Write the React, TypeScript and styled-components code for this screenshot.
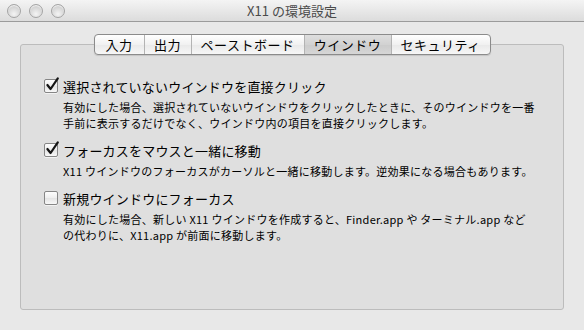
import React from "react";
import styled, { createGlobalStyle } from "styled-components";

const Global = createGlobalStyle`
  html, body { margin: 0; padding: 0; background: #e8e8e8; }
  body { font-family: "Noto Sans CJK JP", "Noto Sans", sans-serif; }
`;

const Window = styled.div`
  width: 584px;
  height: 330px;
  background: #e8e8e8;
  display: flex;
  flex-direction: column;
  overflow: hidden;
`;

const TitleBar = styled.div`
  height: 21px;
  border-bottom: 1px solid #9b9b9b;
  background: linear-gradient(#f4f4f4, #dcdcdc);
  display: flex;
  align-items: center;
  position: relative;
`;

const Lights = styled.div`
  display: flex;
  gap: 8px;
  padding-left: 7px;
`;

const Light = styled.div`
  width: 12px;
  height: 12px;
  border-radius: 50%;
  border: 1px solid #a4a4a4;
  background: radial-gradient(circle at 50% 75%, #f4f4f4 0%, #d8d8d8 55%, #c0c0c0 100%);
  box-shadow: inset 0 1px 1px rgba(255,255,255,0.8);
`;

const Title = styled.div`
  position: absolute;
  left: 0;
  right: 0;
  top: 0;
  height: 21px;
  line-height: 21px;
  text-align: center;
  font-size: 13px;
  color: #4a4a4a;
  pointer-events: none;
`;

const Body = styled.div`
  flex: 1;
  padding: 22px 20px 20px 20px;
  display: flex;
`;

const Panel = styled.div`
  flex: 1;
  border: 1px solid #bcbcbc;
  border-radius: 3px;
  background: #dfdfdf;
  display: flex;
  flex-direction: column;
  align-items: stretch;
`;

const TabRow = styled.div`
  display: flex;
  justify-content: center;
  margin-top: -11px;
`;

const Tabs = styled.div`
  display: flex;
  height: 19px;
  border: 1px solid #8b8b8b;
  border-radius: 4px;
  overflow: hidden;
  box-shadow: 0 1px 1px rgba(0,0,0,0.12);
  background: linear-gradient(#ffffff, #f1f1f1 50%, #e9e9e9 51%, #f7f7f7);
`;

const Tab = styled.div<{ $w: number; $active?: boolean; $last?: boolean }>`
  width: ${(p) => p.$w}px;
  box-sizing: border-box;
  display: flex;
  align-items: center;
  justify-content: center;
  font-size: 13px;
  color: #000;
  letter-spacing: 0.5px;
  border-right: ${(p) => (p.$last ? "none" : "1px solid #b3b3b3")};
  background: ${(p) =>
    p.$active ? "linear-gradient(#dedede, #d2d2d2 50%, #cbcbcb 51%, #d6d6d6)" : "transparent"};
`;

const Options = styled.div`
  display: flex;
  flex-direction: column;
  gap: 10px;
  padding: 22px 20px 0 23px;
`;

const Option = styled.div`
  display: flex;
  flex-direction: column;
`;

const LabelRow = styled.div`
  display: flex;
  align-items: center;
  height: 18px;
  gap: 5px;
`;

const Box = styled.div`
  width: 14px;
  height: 14px;
  box-sizing: border-box;
  border: 1px solid #868686;
  border-radius: 2px;
  background: linear-gradient(#fdfdfd, #eeeeee 50%, #e3e3e3 51%, #f8f8f8);
  box-shadow: 0 1px 0 rgba(255,255,255,0.6);
  position: relative;
  flex-shrink: 0;
`;

const Check = styled.svg`
  position: absolute;
  left: 0px;
  top: -3px;
  width: 14px;
  height: 14px;
  overflow: visible;
`;

const Label = styled.span`
  font-size: 13px;
  color: #000;
  letter-spacing: 0.2px;
`;

const Desc = styled.div`
  margin-top: 4px;
  padding-left: 19px;
  font-size: 11px;
  line-height: 16px;
  color: #000;
  letter-spacing: 0.25px;
  white-space: nowrap;
`;

const CheckBox = ({ checked }: { checked: boolean }) => (
  <Box>
    {checked && (
      <Check viewBox="0 0 14 14">
        <path d="M2.4 8 L5.6 12 L12.8 1.4" fill="none" stroke="#151515" strokeWidth="2.2" strokeLinecap="round" strokeLinejoin="round" />
      </Check>
    )}
  </Box>
);

const tabs = [
  { t: "入力", w: 50 },
  { t: "出力", w: 47 },
  { t: "ペーストボード", w: 113 },
  { t: "ウインドウ", w: 87, active: true },
  { t: "セキュリティ", w: 98 },
];

const options = [
  {
    checked: true,
    label: "選択されていないウインドウを直接クリック",
    desc: [
      "有効にした場合、選択されていないウインドウをクリックしたときに、そのウインドウを一番",
      "手前に表示するだけでなく、ウインドウ内の項目を直接クリックします。",
    ],
  },
  {
    checked: true,
    label: "フォーカスをマウスと一緒に移動",
    desc: ["X11 ウインドウのフォーカスがカーソルと一緒に移動します。逆効果になる場合もあります。"],
  },
  {
    checked: false,
    label: "新規ウインドウにフォーカス",
    desc: [
      "有効にした場合、新しい X11 ウインドウを作成すると、Finder.app や ターミナル.app など",
      "の代わりに、X11.app が前面に移動します。",
    ],
  },
];

export default function App() {
  return (
    <Window>
      <Global />
      <TitleBar>
        <Lights>
          <Light />
          <Light />
          <Light />
        </Lights>
        <Title>X11 の環境設定</Title>
      </TitleBar>
      <Body>
        <Panel>
          <TabRow>
            <Tabs>
              {tabs.map((t, i) => (
                <Tab key={t.t} $w={t.w} $active={t.active} $last={i === tabs.length - 1}>
                  {t.t}
                </Tab>
              ))}
            </Tabs>
          </TabRow>
          <Options>
            {options.map((o) => (
              <Option key={o.label}>
                <LabelRow>
                  <CheckBox checked={o.checked} />
                  <Label>{o.label}</Label>
                </LabelRow>
                <Desc>
                  {o.desc.map((d, i) => (
                    <div key={i}>{d}</div>
                  ))}
                </Desc>
              </Option>
            ))}
          </Options>
        </Panel>
      </Body>
    </Window>
  );
}
